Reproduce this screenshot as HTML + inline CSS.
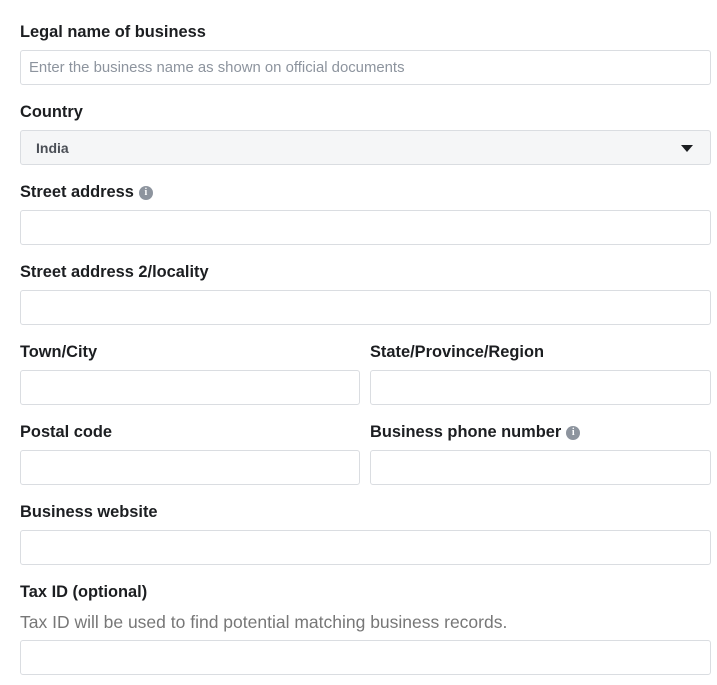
<!DOCTYPE html>
<html><head><style>
body{margin:0;width:717px;height:685px;background:#fff;font-family:"Liberation Sans",sans-serif;position:relative;overflow:hidden}
.l{position:absolute;font-weight:bold;font-size:16.4px;color:#1c1e21;line-height:20px;white-space:nowrap}
.i{position:absolute;height:33px;border:1px solid #dadde1;border-radius:3px;background:#fff;box-sizing:content-box}
.info{display:inline-block;width:14px;height:14px;border-radius:50%;background:#8d949e;color:#fff;font-size:10px;line-height:14px;text-align:center;vertical-align:2px;margin-left:5px;font-family:"Liberation Serif",serif;font-weight:bold}
</style></head><body>
<div class="l" style="left:20px;top:22px">Legal name of business</div>
<div class="i" style="left:20px;top:50px;width:689px"><span style="position:absolute;left:8px;top:9px;font-size:14.9px;color:#8d949e;white-space:nowrap">Enter the business name as shown on official documents</span></div>
<div class="l" style="left:20px;top:102px">Country</div>
<div class="i" style="left:20px;top:130px;width:689px;background:#f5f6f7"><span style="position:absolute;left:15px;top:9px;font-size:14px;font-weight:bold;color:#4b4f56">India</span><span style="position:absolute;right:17px;top:14px;width:0;height:0;border-left:6px solid transparent;border-right:6px solid transparent;border-top:7px solid #1c1e21"></span></div>
<div class="l" style="left:20px;top:182px">Street address<span class="info">i</span></div>
<div class="i" style="left:20px;top:210px;width:689px"></div>
<div class="l" style="left:20px;top:262px">Street address 2/locality</div>
<div class="i" style="left:20px;top:290px;width:689px"></div>
<div class="l" style="left:20px;top:342px">Town/City</div>
<div class="l" style="left:370px;top:342px">State/Province/Region</div>
<div class="i" style="left:20px;top:370px;width:338px"></div>
<div class="i" style="left:370px;top:370px;width:339px"></div>
<div class="l" style="left:20px;top:422px">Postal code</div>
<div class="l" style="left:370px;top:422px">Business phone number<span class="info">i</span></div>
<div class="i" style="left:20px;top:450px;width:338px"></div>
<div class="i" style="left:370px;top:450px;width:339px"></div>
<div class="l" style="left:20px;top:502px">Business website</div>
<div class="i" style="left:20px;top:530px;width:689px"></div>
<div class="l" style="left:20px;top:582px">Tax ID (optional)</div>
<div style="position:absolute;left:20px;top:612px;font-size:17.5px;color:#777;line-height:20px;white-space:nowrap">Tax ID will be used to find potential matching business records.</div>
<div class="i" style="left:20px;top:640px;width:689px"></div>
</body></html>
